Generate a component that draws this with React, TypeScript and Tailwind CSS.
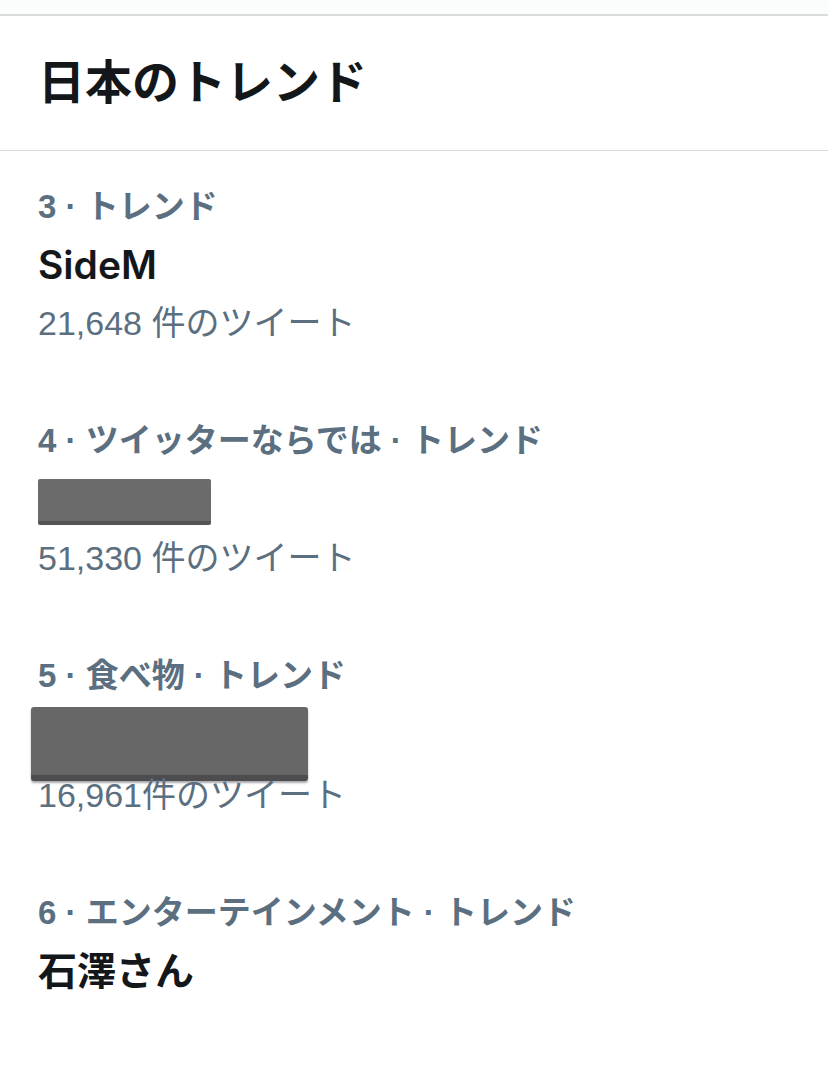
const font = { fontFamily: '"Liberation Sans", "Noto Sans CJK JP", sans-serif' };
const nameFont = { fontFamily: 'Inter, "Noto Sans CJK JP", sans-serif' };

type Trend = {
  label: string;
  name?: string;
  count?: string;
  redact?: 'small' | 'large';
};

const trends: Trend[] = [
  { label: '3 · トレンド', name: 'SideM', count: '21,648 件のツイート' },
  { label: '4 · ツイッターならでは · トレンド', redact: 'small', count: '51,330 件のツイート' },
  { label: '5 · 食べ物 · トレンド', redact: 'large', count: '16,961件のツイート' },
  { label: '6 · エンターテインメント · トレンド', name: '石澤さん' },
];

const TrendItem = ({ item }: { item: Trend }) => (
  <div className="flex flex-col pl-[38px] mb-[60px]">
    <div className="h-[58px] flex items-center text-[33px] font-bold text-[#5b6f80]">
      {item.label}
    </div>
    {item.name && (
      <div className="h-[58px] flex items-center text-[39px] font-semibold text-[#14171a]" style={nameFont}>
        {item.name}
      </div>
    )}
    {item.redact === 'small' && (
      <div className="h-[59px] pt-[9px]">
        <div className="w-[173px] h-[46px] bg-[#6b6b6b] rounded-[2px] border-b-[4px] border-[#545454]" />
      </div>
    )}
    {item.redact === 'large' && (
      <div className="h-[61px] -ml-[7px] pt-[2px]">
        <div className="w-[277px] h-[74px] bg-[#676767] rounded-[3px] border-b-[6px] border-[#4d4d50] shadow-[0_2px_2px_rgba(40,40,60,0.4)]" />
      </div>
    )}
    {item.count && (
      <div className="h-[58px] flex items-center text-[34px] text-[#5b6f80]">
        {item.count}
      </div>
    )}
  </div>
);

export default function App() {
  return (
    <div className="w-[828px] h-[1069px] bg-white overflow-hidden" style={font}>
      <div className="h-[16px] bg-[#fbfcfc] border-b-[2px] border-[#d9dbdc]" />
      <div className="h-[135px] flex items-center pl-[38px] border-b-[1px] border-[#d9dbdc]">
        <h1 className="text-[47px] font-bold text-[#14171a]">日本のトレンド</h1>
      </div>
      <div className="pt-[27px]">
        {trends.map((t) => (
          <TrendItem key={t.label} item={t} />
        ))}
      </div>
    </div>
  );
}
